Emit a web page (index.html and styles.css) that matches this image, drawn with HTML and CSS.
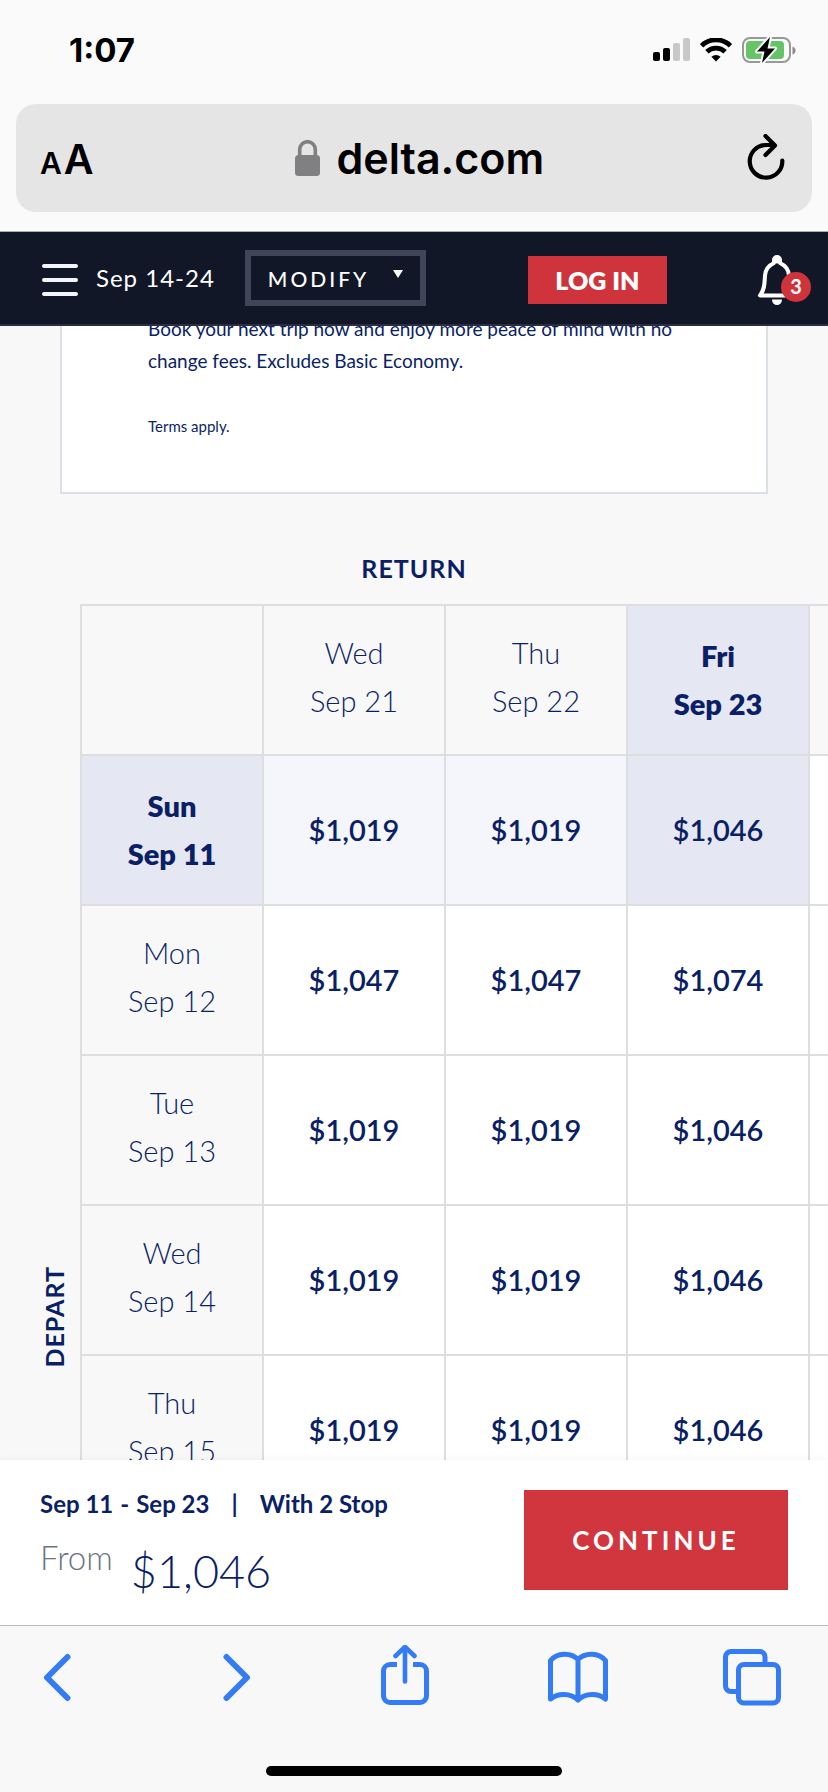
FILE: index.html
```html
<!DOCTYPE html>
<html lang="en">
<head>
<meta charset="utf-8">
<meta name="viewport" content="width=device-width, initial-scale=1">
<title>delta.com</title>
<link rel="stylesheet" href="styles.css">
</head>
<body>
<div class="phone">
  <div class="status">
    <time class="status-time">1:07</time>
    <div class="status-icons">
      <svg width="37" height="24" viewBox="0 0 37 24" aria-hidden="true">
        <rect x="0" y="14" width="7" height="9" rx="2"/>
        <rect x="10" y="10" width="7" height="13" rx="2"/>
        <rect x="20" y="5" width="7" height="18" rx="2" fill="#c8c8c8"/>
        <rect x="30" y="0" width="7" height="23" rx="2" fill="#c8c8c8"/>
      </svg>
      <svg width="32" height="24" viewBox="0 0 32 24" fill="none" stroke="#000" aria-hidden="true">
        <path d="M1.500 7.800a20.500 20.500 0 0 1 29 0" stroke-width="4.800"/>
        <path d="M6.900 13.800a13 13 0 0 1 18.200 0" stroke-width="4.800"/>
        <path d="M16 23.500l-4.600-4.700a6.500 6.500 0 0 1 9.200 0z" fill="#000" stroke="none"/>
      </svg>
      <svg width="54" height="28" viewBox="0 0 54 28" aria-hidden="true">
        <rect x="1" y="2" width="47" height="24" rx="7" fill="none" stroke="#98989a" stroke-width="2"/>
        <rect x="4" y="5" width="38" height="18" rx="4" fill="#65c466"/>
        <path d="M50.500 10.500q3 1 3 4t-3 4z" fill="#8a8a8c"/>
        <path d="M28 1L15 15.500h7.500L20 27l13-14.500h-7.500z" stroke="#fafafa" stroke-width="4" stroke-linejoin="round"/>
        <path d="M28 1L15 15.500h7.500L20 27l13-14.500h-7.500z"/>
      </svg>
    </div>
  </div>

  <div class="address">
    <button class="text-size" aria-label="Text size"><span class="small-a">A</span><span class="big-a">A</span></button>
    <div class="url">
      <svg width="26" height="36" viewBox="0 0 26 36" fill="#808082" aria-hidden="true">
        <rect x="0" y="15" width="25" height="21" rx="3.500"/>
        <path d="M4.700 16V9.500a7.800 7.800 0 0 1 15.600 0V16" fill="none" stroke="#808082" stroke-width="3.600"/>
      </svg>
      <span>delta.com</span>
    </div>
    <button class="reload" aria-label="Reload">
      <svg width="40" height="48" viewBox="0 0 40 48" fill="none" stroke="#000" stroke-width="4.200" stroke-linecap="round" stroke-linejoin="round">
        <path d="M36.300 26.500A16.300 16.300 0 1 1 20 11h8"/>
        <path d="M19.500 2L29 11.500l-9.500 9.500"/>
      </svg>
    </button>
  </div>

  <header class="topbar">
    <button class="menu" aria-label="Menu">
      <svg width="36" height="32" viewBox="0 0 36 32" stroke="#f4f5f7" stroke-width="4" stroke-linecap="round">
        <path d="M2 2h32M2 16h32M2 30h32"/>
      </svg>
    </button>
    <span class="trip-dates">Sep 14-24</span>
    <button class="modify">MODIFY
      <svg width="10" height="8" viewBox="0 0 10 8" fill="#fff" aria-hidden="true"><path d="M0 0h10L5 8z"/></svg>
    </button>
    <button class="login">LOG IN</button>
    <button class="alerts" aria-label="Notifications">
      <svg width="40" height="52" viewBox="0 0 40 52" fill="none" stroke="#fff" stroke-width="4" stroke-linejoin="round">
        <path d="M3 40.500h34c-5-6-4.500-13-5-20-.5-6.500-4.500-10.500-9-12.500V5a3 3 0 0 0-6 0v3c-4.500 2-8.500 6-9 12.500-.5 7 0 14-5 20z"/>
        <path d="M15 44.500h10a5 5.500 0 0 1-10 0z" fill="#fff" stroke="none"/>
        <circle cx="20" cy="5" r="3.500" fill="#fff" stroke="none"/>
      </svg>
      <span class="badge">3</span>
    </button>
  </header>

  <main class="page">
    <section class="promo">
      <p class="promo-text">Book your next trip now and enjoy more peace of mind with no change fees. Excludes Basic Economy.</p>
      <p class="promo-terms">Terms apply.</p>
    </section>
    <h2 class="axis return-label">RETURN</h2>
    <div class="calendar">
      <h2 class="axis depart-label">DEPART</h2>
      <table class="fares">
        <thead>
          <tr><td class="blank"></td><th scope="col">Wed<br>Sep 21</th><th scope="col">Thu<br>Sep 22</th><th scope="col" class="picked">Fri<br>Sep 23</th><td class="blank"></td></tr>
        </thead>
        <tbody>
          <tr><th scope="row" class="picked">Sun<br>Sep 11</th><td class="tint">$1,019</td><td class="tint">$1,019</td><td class="selected">$1,046</td><td></td></tr>
          <tr><th scope="row">Mon<br>Sep 12</th><td>$1,047</td><td>$1,047</td><td>$1,074</td><td></td></tr>
          <tr><th scope="row">Tue<br>Sep 13</th><td>$1,019</td><td>$1,019</td><td>$1,046</td><td></td></tr>
          <tr><th scope="row">Wed<br>Sep 14</th><td>$1,019</td><td>$1,019</td><td>$1,046</td><td></td></tr>
          <tr><th scope="row">Thu<br>Sep 15</th><td>$1,019</td><td>$1,019</td><td>$1,046</td><td></td></tr>
        </tbody>
      </table>
    </div>
  </main>

  <section class="summary">
    <div class="summary-info">
      <p class="summary-trip"><span>Sep 11</span><span class="dash">-</span><span>Sep 23</span><span class="bar">|</span><span>With 2 Stop</span></p>
      <p class="summary-price"><span class="from">From</span><span class="amount">$1,046</span></p>
    </div>
    <button class="continue">CONTINUE</button>
  </section>

  <nav class="toolbar">
    <div class="tools">
      <button aria-label="Back"><svg width="28" height="64" viewBox="0 0 28 64"><path d="M24.500 12L4 32.500 24.500 53" stroke-width="6"/></svg></button>
      <button class="forward" aria-label="Forward"><svg width="28" height="64" viewBox="0 0 28 64"><path d="M3.500 12L24 32.500 3.500 53" stroke-width="6"/></svg></button>
      <button aria-label="Share"><svg width="48" height="64" viewBox="0 0 48 64"><path d="M16 19.500H9a6.500 6.500 0 0 0-6.500 6.500v25A6.500 6.500 0 0 0 9 57.500h30a6.500 6.500 0 0 0 6.500-6.500V26a6.500 6.500 0 0 0-6.500-6.500h-7" stroke-linecap="butt"/><path d="M24 36.500V3M14.500 11L24 1.800 33.500 11" stroke-width="4.600"/></svg></button>
      <button aria-label="Bookmarks"><svg width="60" height="64" viewBox="0 0 60 64"><path d="M30 14.500V55M30 14.500c-7-7.500-21-7-27.500 1V54c7-6 20-6.500 27.500 1 7.500-7.500 20.500-7 27.500-1V15.500c-6.500-8-20.500-8.500-27.500-1z"/></svg></button>
      <button aria-label="Tabs"><svg width="58" height="64" viewBox="0 0 58 64"><path d="M13 46.500H8A5.500 5.500 0 0 1 2.500 41V12A5.500 5.500 0 0 1 8 6.500h28.500A5.500 5.500 0 0 1 42 12v5" stroke-linecap="butt"/><rect x="15.500" y="19.500" width="40" height="38.500" rx="5.500"/></svg></button>
    </div>
    <div class="home-bar"></div>
  </nav>
</div>
</body>
</html>
```
FILE: styles.css
```css
* {
  box-sizing: border-box;
}

body {
  margin: 0;
  background: #f8f8f8;
  color: #0b1f66;
  font-family: Lato, "Open Sans", sans-serif;
}

button {
  margin: 0;
  padding: 0;
  border: 0;
  background: none;
  color: inherit;
  font: inherit;
}

svg {
  display: block;
}

p,
h2 {
  margin: 0;
}

.phone {
  display: flex;
  flex-direction: column;
  height: 100vh;
  background: #fafafa;
}

/* Browser chrome */
.status {
  display: flex;
  flex: none;
  align-items: center;
  justify-content: space-between;
  height: 104px;
  padding: 0 32px 4px 69px;
  color: #000;
}

.status-time {
  font: 700 33px/40px Inter, sans-serif;
}

.status-icons {
  display: flex;
  align-items: center;
  gap: 10px;
}

.address {
  display: flex;
  flex: none;
  align-items: center;
  justify-content: space-between;
  height: 108px;
  margin: 0 16px;
  padding: 0 26px 0 24px;
  border-radius: 20px;
  background: #e5e5e5;
  color: #000;
  font-family: Inter, sans-serif;
}

.text-size {
  display: flex;
  gap: 2px;
  align-items: baseline;
  padding-top: 6px;
  font-weight: 600;
  line-height: 48px;
}

.small-a {
  font-size: 30px;
}

.big-a {
  font-size: 41px;
}

.url {
  display: flex;
  gap: 15px;
  align-items: center;
  font-size: 43px;
  font-weight: 600;
  line-height: 52px;
}

/* Site header */
.topbar {
  display: flex;
  flex: none;
  align-items: center;
  height: 95px;
  margin-top: 19px;
  padding: 0 17px 0 42px;
  border-top: 1px solid #a9b0b0;
  border-bottom: 2px solid #2a2d40;
  background: #121728;
  color: #fff;
}

.menu {
  padding-top: 4px;
}

.trip-dates {
  margin-left: 18px;
  font-size: 24px;
  line-height: 32px;
  letter-spacing: 1px;
}

.modify {
  display: flex;
  align-items: center;
  justify-content: space-between;
  width: 181px;
  height: 56px;
  margin-left: 30px;
  padding: 0 17px;
  border: 6px solid #414558;
  font-size: 21px;
  font-weight: 500;
  letter-spacing: 3px;
}

.modify svg {
  margin-bottom: 8px;
}

.login {
  width: 139px;
  height: 48px;
  margin: 4px auto 0 102px;
  background: #cf343c;
  font-size: 25px;
  font-weight: 800;
}

.alerts {
  position: relative;
  width: 54px;
  padding-top: 6px;
}

.badge {
  position: absolute;
  right: 0;
  bottom: 5px;
  width: 30px;
  height: 30px;
  border-radius: 50%;
  background: #cf343c;
  font-size: 20px;
  font-weight: 700;
  line-height: 28px;
}

/* Scrolled page */
.page {
  flex: 1;
  min-height: 0;
  overflow: hidden;
  background: #f8f8f8;
}

.promo {
  margin: -13px 60px 0;
  padding: 0 86px 49px;
  border: 2px solid #dadfe8;
  border-top: 0;
  background: #fff;
}

.promo-text {
  font-size: 19px;
  line-height: 32px;
}

.promo-terms {
  padding-top: 32px;
  font-size: 15px;
  line-height: 34px;
}

.axis {
  font-size: 25px;
  font-weight: 700;
  line-height: 32px;
  letter-spacing: 1px;
}

.return-label {
  margin: 58px 0 20px;
  text-align: center;
}

.calendar {
  display: flex;
  align-items: flex-start;
}

.depart-label {
  flex: none;
  width: 80px;
  margin-top: 662px;
  padding-right: 38px;
  writing-mode: vertical-rl;
  transform: rotate(180deg);
}

.fares {
  flex: none;
  width: 912px;
  border-collapse: collapse;
  table-layout: fixed;
}

.fares th,
.fares td {
  height: 150px;
  padding: 0;
  border: 2px solid #dddee0;
  background: #fff;
  font-size: 29px;
  font-weight: 600;
  line-height: 48px;
  text-align: center;
}

.fares th {
  padding-bottom: 6px;
  background: #f8f8f8;
  font-weight: 300;
}

.fares .blank {
  background: #f8f8f8;
}

.fares .picked {
  padding: 0;
  background: #e5e8f2;
  font-weight: 800;
}

.fares .tint {
  background: #f4f6fb;
}

.fares .selected {
  background: #e5e8f2;
}

/* Fare summary */
.summary {
  display: flex;
  flex: none;
  align-items: flex-start;
  justify-content: space-between;
  height: 165px;
  padding: 30px 40px 0;
  background: #fff;
  box-shadow: 0 0 8px #0000000d;
}

.summary-trip {
  display: flex;
  font-size: 24px;
  font-weight: 700;
  line-height: 28px;
}

.dash {
  margin: 0 7px;
}

.bar {
  margin: 0 22px;
}

.summary-price {
  display: flex;
  gap: 18px;
  padding-top: 20px;
  font-weight: 300;
}

.from {
  color: #6b7484;
  font-size: 33px;
  line-height: 38px;
}

.amount {
  font-size: 45px;
  line-height: 66px;
}

.continue {
  width: 264px;
  height: 100px;
  background: #d1353e;
  color: #fff;
  font-size: 26px;
  font-weight: 700;
  letter-spacing: 4px;
}

/* Browser toolbar */
.toolbar {
  flex: none;
  height: 167px;
  padding-top: 19px;
  border-top: 1px solid #b9bbbb;
  background: #f8f8f8;
}

.tools {
  display: flex;
  justify-content: space-between;
  padding: 0 46px 0 27px;
}

.tools button {
  display: flex;
  justify-content: center;
  width: 60px;
}

.tools .forward {
  padding-left: 12px;
}

.tools svg {
  flex: none;
  fill: none;
  stroke: #347bf6;
  stroke-width: 5;
  stroke-linecap: round;
  stroke-linejoin: round;
}

.home-bar {
  width: 296px;
  height: 10px;
  margin: 57px auto 0;
  border-radius: 5px;
  background: #000;
}
```
